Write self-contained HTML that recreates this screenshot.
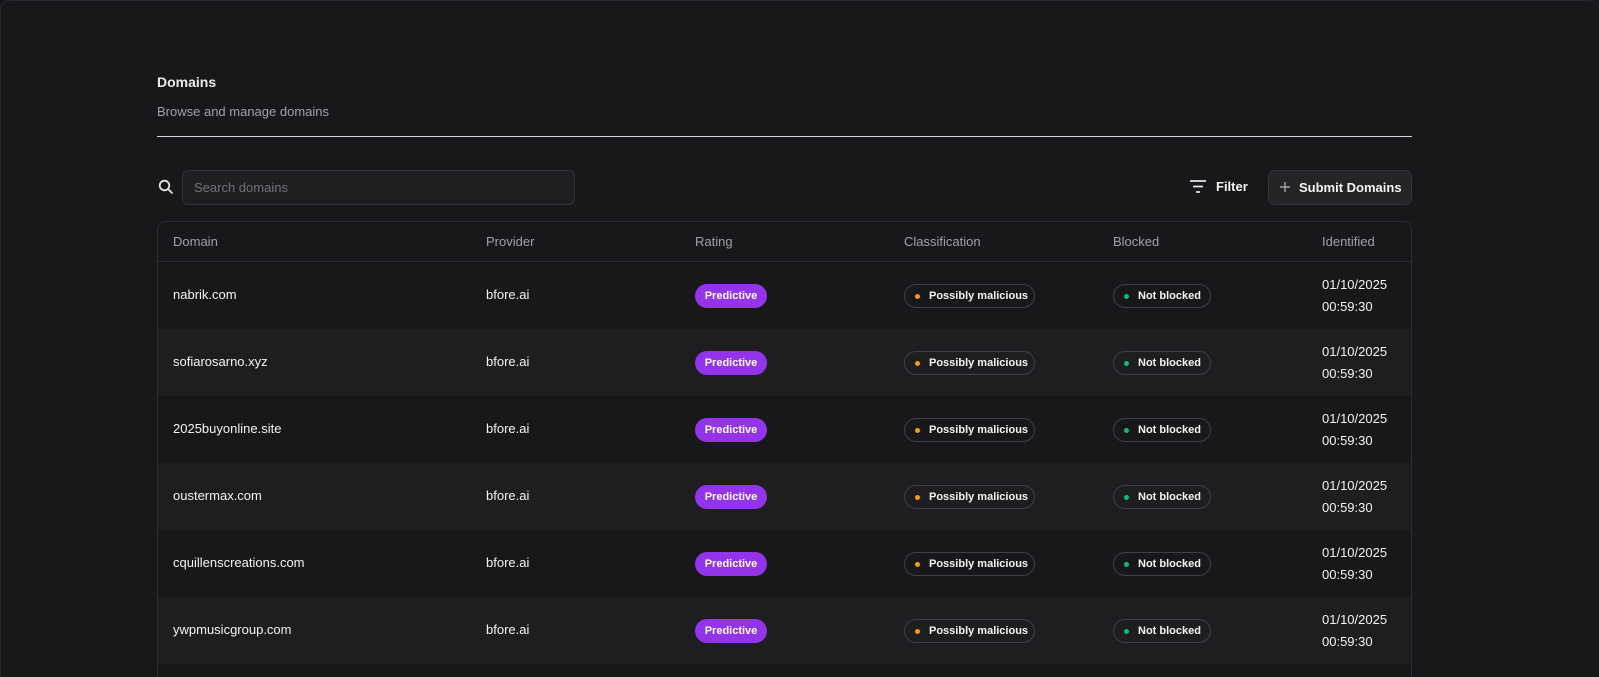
<!DOCTYPE html>
<html><head><style>
*{box-sizing:border-box;margin:0;padding:0}
html,body{width:1599px;height:677px;overflow:hidden}
body{background:#18181b;font-family:"Liberation Sans",sans-serif;color:#e4e4e7;position:relative}
.frame{position:absolute;left:0;top:0;width:1599px;height:677px;border:1px solid #2a2a2e;border-radius:10px 10px 0 0;border-bottom:none;border-right:none}
.abs{position:absolute}
h1{position:absolute;left:157px;top:74px;font-size:14px;font-weight:bold;color:#ececee}
.sub{left:157px;top:104px;font-size:13px;color:#a1a1aa}
.hr{left:157px;top:136px;width:1255px;height:1px;background:#d4d4d8}
.search{left:182px;top:170px;width:393px;height:35px;border:1px solid #333338;border-radius:6px;background:#1f1f22;font-size:13px;color:#71717a;padding:9px 11px}
.btn{left:1268px;top:170px;width:144px;height:35px;border:1px solid #333338;border-radius:7px;background:#252528;font-size:13px;font-weight:bold;color:#f4f4f5;padding:9px 0 0 30px}
.filter{left:1216px;top:179px;font-size:13px;font-weight:bold;color:#f4f4f5}
.table{left:157px;top:221px;width:1255px;height:456px;border:1px solid #2e2e32;border-bottom:none;border-radius:8px 8px 0 0;overflow:hidden}
.th{position:absolute;top:0;height:40px;width:100%;border-bottom:1px solid #2e2e32;font-size:13px;color:#a1a1aa}
.th span,.row span{position:absolute}
.row{position:absolute;left:0;width:100%;height:67px;font-size:13px;color:#f4f4f5}
.row.alt{background:#1e1e21}
.pred{background:#9333ea;color:#fff;font-weight:bold;font-size:11px;border-radius:12px;height:24px;width:72px;line-height:24px;text-align:center}
.pill{border:1px solid #3f3f46;border-radius:12px;height:24px;font-size:11px;font-weight:bold;color:#f4f4f5;line-height:22px;padding-left:24px}
.pill::before{content:"";position:absolute;left:10px;top:9px;width:5px;height:5px;border-radius:50%;background:var(--c)}
</style></head><body>
<div class="frame"></div>
<h1>Domains</h1>
<div class="abs sub">Browse and manage domains</div>
<div class="abs hr"></div>
<svg class="abs" style="left:158px;top:179px" width="16" height="16" viewBox="0 0 16 16"><circle cx="6.5" cy="6.5" r="4.8" fill="none" stroke="#e4e4e7" stroke-width="1.8"/><path d="M10 10l4 4" stroke="#e4e4e7" stroke-width="1.8" stroke-linecap="round"/></svg>
<div class="abs search">Search domains</div>
<svg class="abs" style="left:1189px;top:179px" width="18" height="16" viewBox="0 0 18 16"><path d="M1 2h16M4 7.5h10M7 13h4" stroke="#e4e4e7" stroke-width="1.8"/></svg>
<div class="abs filter">Filter</div>
<div class="abs btn">Submit Domains</div>
<svg class="abs" style="left:1279px;top:181px" width="12" height="12" viewBox="0 0 12 12"><path d="M6 1v10M1 6h10" stroke="#a1a1aa" stroke-width="1.4"/></svg>
<div class="abs table">
<div class="th"><span style="left:15px;top:12px">Domain</span><span style="left:328px;top:12px">Provider</span><span style="left:537px;top:12px">Rating</span><span style="left:746px;top:12px">Classification</span><span style="left:955px;top:12px">Blocked</span><span style="left:1164px;top:12px">Identified</span></div>
<div class="row" style="top:40px"><span style="left:15px;top:25px">nabrik.com</span><span style="left:328px;top:25px">bfore.ai</span><span class="pred" style="left:537px;top:22px">Predictive</span><span class="pill" style="left:746px;top:22px;width:131px;--c:#f59e0b">Possibly malicious</span><span class="pill" style="left:955px;top:22px;width:98px;--c:#10b981">Not blocked</span><span style="left:1164px;top:12px;line-height:22px">01/10/2025<br>00:59:30</span></div>
<div class="row alt" style="top:107px"><span style="left:15px;top:25px">sofiarosarno.xyz</span><span style="left:328px;top:25px">bfore.ai</span><span class="pred" style="left:537px;top:22px">Predictive</span><span class="pill" style="left:746px;top:22px;width:131px;--c:#f59e0b">Possibly malicious</span><span class="pill" style="left:955px;top:22px;width:98px;--c:#10b981">Not blocked</span><span style="left:1164px;top:12px;line-height:22px">01/10/2025<br>00:59:30</span></div>
<div class="row" style="top:174px"><span style="left:15px;top:25px">2025buyonline.site</span><span style="left:328px;top:25px">bfore.ai</span><span class="pred" style="left:537px;top:22px">Predictive</span><span class="pill" style="left:746px;top:22px;width:131px;--c:#f59e0b">Possibly malicious</span><span class="pill" style="left:955px;top:22px;width:98px;--c:#10b981">Not blocked</span><span style="left:1164px;top:12px;line-height:22px">01/10/2025<br>00:59:30</span></div>
<div class="row alt" style="top:241px"><span style="left:15px;top:25px">oustermax.com</span><span style="left:328px;top:25px">bfore.ai</span><span class="pred" style="left:537px;top:22px">Predictive</span><span class="pill" style="left:746px;top:22px;width:131px;--c:#f59e0b">Possibly malicious</span><span class="pill" style="left:955px;top:22px;width:98px;--c:#10b981">Not blocked</span><span style="left:1164px;top:12px;line-height:22px">01/10/2025<br>00:59:30</span></div>
<div class="row" style="top:308px"><span style="left:15px;top:25px">cquillenscreations.com</span><span style="left:328px;top:25px">bfore.ai</span><span class="pred" style="left:537px;top:22px">Predictive</span><span class="pill" style="left:746px;top:22px;width:131px;--c:#f59e0b">Possibly malicious</span><span class="pill" style="left:955px;top:22px;width:98px;--c:#10b981">Not blocked</span><span style="left:1164px;top:12px;line-height:22px">01/10/2025<br>00:59:30</span></div>
<div class="row alt" style="top:375px"><span style="left:15px;top:25px">ywpmusicgroup.com</span><span style="left:328px;top:25px">bfore.ai</span><span class="pred" style="left:537px;top:22px">Predictive</span><span class="pill" style="left:746px;top:22px;width:131px;--c:#f59e0b">Possibly malicious</span><span class="pill" style="left:955px;top:22px;width:98px;--c:#10b981">Not blocked</span><span style="left:1164px;top:12px;line-height:22px">01/10/2025<br>00:59:30</span></div>
</div>
</body></html>
